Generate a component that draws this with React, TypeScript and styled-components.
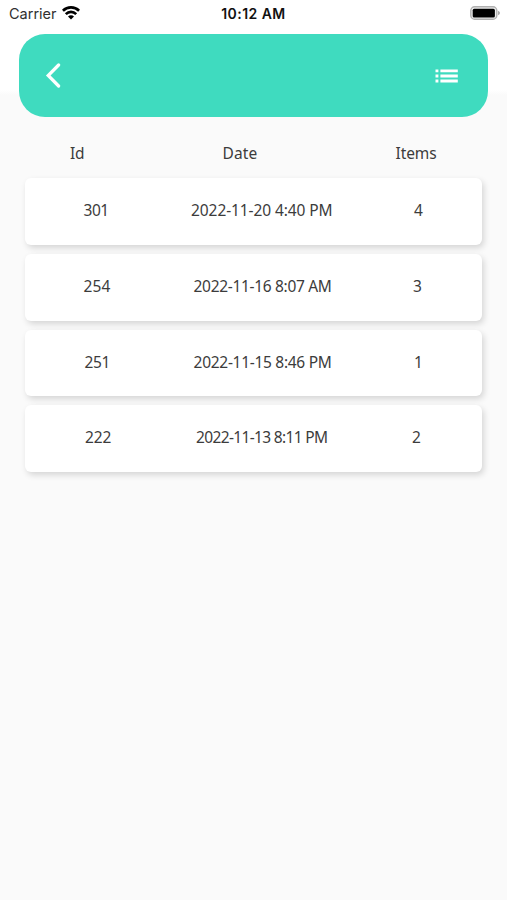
import React from "react";
import styled, { createGlobalStyle } from "styled-components";

const GlobalStyle = createGlobalStyle`
  * { box-sizing: border-box; }
  body { margin: 0; background: #fafafa; }
`;

const Screen = styled.main`
  width: 507px;
  height: 900px;
  overflow: hidden;
  color: #3c3c3c;
  font-family: "Noto Sans", sans-serif;
  background: linear-gradient(#fff 0 90px, #fafafa 95px);
`;

const StatusBar = styled.div`
  height: 34.4px;
  padding: 0 7px 7px 9px;
  display: grid;
  grid-template-columns: 1fr auto 1fr;
  align-items: center;
  font-family: Inter, sans-serif;
  font-size: 14px;
  color: #111;
`;

const Carrier = styled.div`
  display: flex;
  align-items: center;
  gap: 5px;
  font-size: 14.5px;
  color: #303030;
  svg { margin-top: -2px; }
`;

const Time = styled.div`
  font-weight: 600;
  letter-spacing: 0.45px;
  margin-right: 2px;
`;

const Battery = styled.div`
  display: flex;
  justify-content: flex-end;
  svg { margin-top: -1px; }
`;

const Header = styled.header`
  height: 82.6px;
  margin: 0 18.6px 0 19.4px;
  padding: 0 29.4px 0 25.6px;
  border-radius: 26px;
  display: flex;
  align-items: center;
  justify-content: space-between;
  background: #3fdbbf;
`;

const IconButton = styled.button`
  display: flex;
  padding: 0;
  border: 0;
  background: none;
`;

const Columns = styled.div`
  height: 61.4px;
  padding: 11px 0 0 27px;
  display: flex;
  align-items: center;
`;

const List = styled.div`
  margin: 0 24.6px 0 25.4px;
  display: flex;
  flex-direction: column;
  gap: 9.2px;
`;

const Card = styled.div`
  height: 66.5px;
  padding-bottom: 2.8px;
  display: flex;
  align-items: center;
  border-radius: 6px;
  background: #fff;
  box-shadow: 2px 3px 6px rgba(0, 0, 0, 0.15);
`;

const Cell = styled.span<{ $lead: number; $width: number; $spacing?: number }>`
  flex: none;
  margin-left: ${(p) => p.$lead}px;
  width: ${(p) => p.$width}px;
  font-size: 15.5px;
  line-height: 22px;
  letter-spacing: ${(p) => p.$spacing ?? 0}px;
  white-space: nowrap;
`;

type Order = {
  id: string;
  date: string;
  items: string;
  idLead: number;
  dateLead: number;
  dateWidth: number;
  itemLead: number;
  spacing: number;
  idSpacing: number;
};

const orders: Order[] = [
  { id: "301", date: "2022-11-20 4:40 PM", items: "4", idLead: 58.2, dateLead: 80.5, dateWidth: 141, itemLead: 82, spacing: -0.1, idSpacing: -0.5 },
  { id: "254", date: "2022-11-16 8:07 AM", items: "3", idLead: 58.2, dateLead: 83, dateWidth: 138, itemLead: 81.5, spacing: -0.32, idSpacing: 0.1 },
  { id: "251", date: "2022-11-15 8:46 PM", items: "1", idLead: 59, dateLead: 82.2, dateWidth: 138, itemLead: 82.5, spacing: -0.29, idSpacing: -0.3 },
  { id: "222", date: "2022-11-13 8:11 PM", items: "2", idLead: 59.5, dateLead: 84.2, dateWidth: 131, itemLead: 85, spacing: -0.66, idSpacing: -0.1 },
];

export default function App() {
  return (
    <>
      <GlobalStyle />
      <Screen>
        <StatusBar>
          <Carrier>
            Carrier
            <svg width="18" height="14" viewBox="0 0 18 14" fill="none" stroke="#000" strokeWidth="2.7">
              <path d="M.9 4.7C5.4.3 12.6.3 17.1 4.7M3.8 8.1C6.8 5.2 11.2 5.2 14.2 8.1" />
              <path d="M6 10.4C7.6 8.9 10.4 8.9 12 10.4L9 13.5Z" fill="#000" stroke="none" />
            </svg>
          </Carrier>
          <Time>10:12 AM</Time>
          <Battery>
            <svg width="30" height="14" viewBox="0 0 30 14">
              <rect x="0.8" y="0.8" width="26" height="12.4" rx="3.8" fill="#eee" stroke="#b0b0b0" strokeWidth="1.4" />
              <rect x="2.7" y="2.7" width="22.2" height="8.7" rx="1.5" />
              <path d="M28 4.8Q30 5.5 30 7T28 9.2Z" fill="#aaa" />
            </svg>
          </Battery>
        </StatusBar>
        <Header>
          <IconButton aria-label="Back">
            <svg width="16" height="25" viewBox="0 0 16 25" fill="none" stroke="#fff" strokeWidth="3.2" strokeLinecap="round">
              <path d="M13.6 2L3.2 12.5L13.6 23" />
            </svg>
          </IconButton>
          <IconButton aria-label="List">
            <svg width="24" height="14" viewBox="0 0 24 14" fill="#fff">
              <path d="M.5 .4h2.9v2.9H.5zM.5 5.5h2.9v2.9H.5zM.5 10.6h2.9v2.9H.5zM5.4 .4h17.4v2.9H5.4zM5.4 5.5h17.4v2.9H5.4zM5.4 10.6h17.4v2.9H5.4z" />
            </svg>
          </IconButton>
        </Header>
        <Columns>
          <Cell $lead={43} $width={15} $spacing={-0.2}>Id</Cell>
          <Cell $lead={137.5} $width={35} $spacing={0.1}>Date</Cell>
          <Cell $lead={138} $width={42} $spacing={-0.1}>Items</Cell>
        </Columns>
        <List>
          {orders.map((o) => (
            <Card key={o.id}>
              <Cell $lead={o.idLead} $width={27} $spacing={o.idSpacing}>{o.id}</Cell>
              <Cell $lead={o.dateLead} $width={o.dateWidth} $spacing={o.spacing}>{o.date}</Cell>
              <Cell $lead={o.itemLead} $width={10}>{o.items}</Cell>
            </Card>
          ))}
        </List>
      </Screen>
    </>
  );
}
